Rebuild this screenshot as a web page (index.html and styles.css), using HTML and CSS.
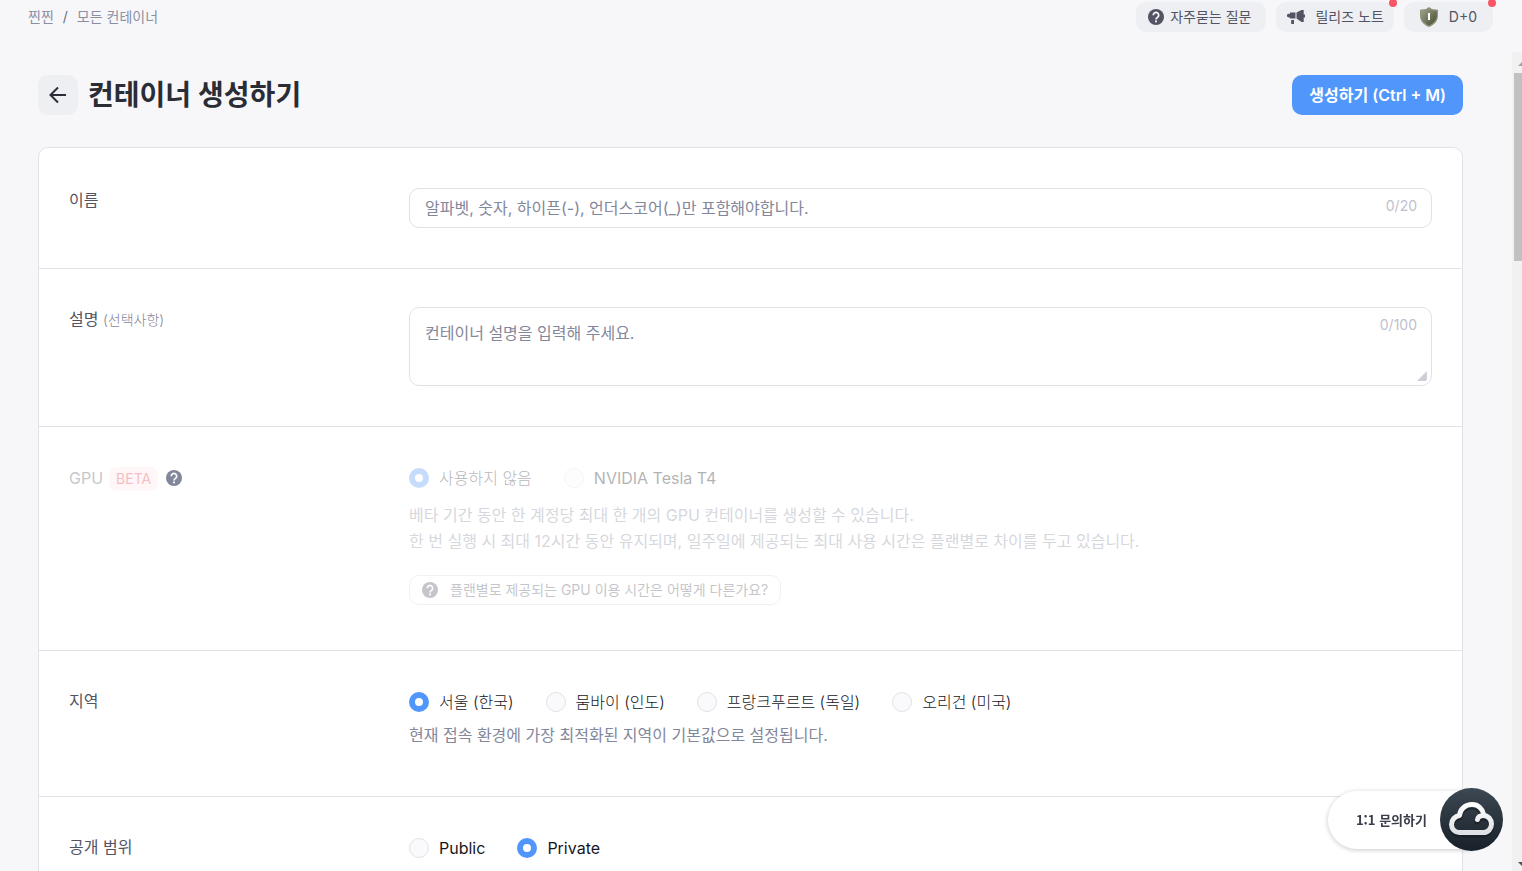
FILE: index.html
```html
<!DOCTYPE html>
<html lang="ko">
<head>
<meta charset="utf-8">
<title>컨테이너 생성하기</title>
<link rel="stylesheet" href="styles.css">
</head>
<body>
<svg class="defs" width="0" height="0" aria-hidden="true">
  <symbol id="help" viewBox="0 0 16 16">
    <circle cx="8" cy="8" r="8" fill="currentColor"/>
    <path d="M5.300 6.300a2.700 2.700 0 1 1 4.200 2.100c-.9.6-1.500 1-1.500 2" fill="none" stroke="#fff" stroke-width="1.700"/>
    <rect x="7.100" y="11.500" width="1.800" height="1.800" fill="#fff"/>
  </symbol>
</svg>
<header class="topbar">
  <nav class="crumbs">
    <a href="#">찐찐</a><span class="slash">/</span><a href="#">모든 컨테이너</a>
  </nav>
  <div class="tools">
    <button type="button" class="chip chip-faq"><svg class="help-icon"><use href="#help"/></svg><span>자주묻는 질문</span></button>
    <button type="button" class="chip chip-notes">
      <svg width="18" height="16" viewBox="0 0 18 16" fill="currentColor"><path d="M3 3.500h5.500v6H3V8.500H1.800a1.900 1.900 0 0 1 0-3.800H3zM9.500 3.500L14.500 1h2.200v12h-2.200L9.500 9.500zM16.500 5.500h1.500v3h-1.500zM4.200 11h2.800v4H4.200z"/></svg>
      <span>릴리즈 노트</span><span class="dot"></span>
    </button>
    <button type="button" class="chip chip-day">
      <svg width="20" height="20" viewBox="0 0 20 20">
        <defs><linearGradient id="shield" x1="0" y1="0" x2="1" y2="1"><stop offset="0" stop-color="#a3a58f"/><stop offset="1" stop-color="#414a2b"/></linearGradient></defs>
        <path d="M10 0l3 2 6 .8v6.200c0 5-4 9-9 11-5-2-9-6-9-11V2.800L7 2z" fill="#8f947c"/>
        <path d="M10 1.500l2.700 1.800 5 .8v5c0 4-3.700 7.500-7.700 9.500-4-2-7.700-5.500-7.700-9.500v-5l5-.8z" fill="url(#shield)"/>
        <path d="M10 6v7" stroke="#fff" stroke-width="2"/>
      </svg>
      <span>D+0</span><span class="dot"></span>
    </button>
  </div>
</header>
<div class="viewport">
  <main class="page">
    <div class="heading">
      <button type="button" class="back" aria-label="뒤로">
        <svg width="18" height="18" viewBox="0 0 18 18" fill="none" stroke="currentColor" stroke-width="2"><path d="M17 9H2M9 1.500L1.500 9 9 16.500"/></svg>
      </button>
      <h1>컨테이너 생성하기</h1>
      <button type="submit" form="create" class="submit">생성하기 (Ctrl + M)</button>
    </div>
    <form class="card" id="create">
      <div class="row">
        <label class="name" for="cname">이름</label>
        <div class="field">
          <input class="text" id="cname" type="text" placeholder="알파벳, 숫자, 하이픈(-), 언더스코어(_)만 포함해야합니다.">
          <span class="count">0/20</span>
        </div>
      </div>
      <div class="row row-desc">
        <label class="name" for="cdesc">설명 <small>(선택사항)</small></label>
        <div class="field">
          <textarea class="text area" id="cdesc" placeholder="컨테이너 설명을 입력해 주세요."></textarea>
          <span class="count">0/100</span>
          <svg class="grip" width="10" height="10" viewBox="0 0 10 10"><path d="M10 0v8a2 2 0 0 1-2 2H0z" fill="#cdced8"/></svg>
        </div>
      </div>
      <div class="row row-gpu">
        <div class="name gpu-name"><span class="faded">GPU</span><span class="beta faded">BETA</span><svg class="help-icon"><use href="#help"/></svg></div>
        <div class="faded">
          <div class="radios" role="radiogroup" aria-label="GPU">
            <label><input type="radio" name="gpu" checked>사용하지 않음</label>
            <label class="latin"><input type="radio" name="gpu">NVIDIA Tesla T4</label>
          </div>
          <p class="hint">베타 기간 동안 한 계정당 최대 한 개의 GPU 컨테이너를 생성할 수 있습니다.<br>한 번 실행 시 최대 12시간 동안 유지되며, 일주일에 제공되는 최대 사용 시간은 플랜별로 차이를 두고 있습니다.</p>
          <button type="button" class="plan"><svg class="help-icon"><use href="#help"/></svg>플랜별로 제공되는 GPU 이용 시간은 어떻게 다른가요?</button>
        </div>
      </div>
      <div class="row row-region">
        <div class="name short">지역</div>
        <div>
          <div class="radios" role="radiogroup" aria-label="지역">
            <label><input type="radio" name="region" checked>서울 (한국)</label>
            <label><input type="radio" name="region">뭄바이 (인도)</label>
            <label><input type="radio" name="region">프랑크푸르트 (독일)</label>
            <label><input type="radio" name="region">오리건 (미국)</label>
          </div>
          <p class="hint">현재 접속 환경에 가장 최적화된 지역이 기본값으로 설정됩니다.</p>
        </div>
      </div>
      <div class="row">
        <div class="name short">공개 범위</div>
        <div class="radios" role="radiogroup" aria-label="공개 범위">
          <label class="latin"><input type="radio" name="scope">Public</label>
          <label class="latin"><input type="radio" name="scope" checked>Private</label>
        </div>
      </div>
    </form>
  </main>
  <div class="scroll" aria-hidden="true">
    <svg width="10" height="21" viewBox="0 0 10 21"><path d="M6 14l5-5v5z" fill="#a3a3a3"/></svg>
    <div class="thumb"></div>
    <svg width="10" height="14" viewBox="0 0 10 14"><path d="M6 5h5v5z" fill="#505050"/></svg>
  </div>
</div>
<button type="button" class="chat">
  <span class="chat-label">1:1 문의하기</span>
  <svg class="cloud" width="64" height="64" viewBox="0 0 64 64">
    <defs>
      <linearGradient id="disc" x1="0" y1="0" x2="0" y2="1"><stop offset="0" stop-color="#3d4852"/><stop offset="1" stop-color="#182029"/></linearGradient>
      <linearGradient id="line" x1="0" y1="0" x2="0" y2="1"><stop offset="0" stop-color="#fff"/><stop offset="1" stop-color="#dfe1e4"/></linearGradient>
      <path id="outline" d="M37.500 31.500C38 29 40.500 27.500 43.500 27.500 48 27.500 51.500 31.500 51.500 36S48 44.500 43.500 44.500H19.500C15 44.500 11.500 41 11.500 36.500S15 28 19.500 27.500C20 21 25.500 16.500 32 16.500c6 0 10.500 4 12 10.500" fill="none" stroke-linecap="round" stroke-linejoin="round"/>
    </defs>
    <circle cx="31.500" cy="31.500" r="31.500" fill="url(#disc)"/>
    <use href="#outline" y="2" stroke="#10171e" stroke-opacity=".5" stroke-width="6"/>
    <use href="#outline" stroke="url(#line)" stroke-width="5"/>
  </svg>
</button>
</body>
</html>
```
FILE: styles.css
```css
* { box-sizing: border-box; }
body {
  margin: 0;
  height: 100vh;
  display: flex;
  flex-direction: column;
  overflow: hidden;
  background: #f7f7fa;
  color: #2b2d36;
  font: 16px/26px Inter, "Noto Sans CJK KR", sans-serif;
}
button, input, textarea { font: inherit; color: inherit; }
button { border: 0; padding: 0; cursor: pointer; }
a { color: inherit; text-decoration: none; }
.defs { position: absolute; }
.help-icon { width: 16px; height: 16px; flex: none; }

.topbar {
  flex: none;
  height: 52px;
  padding: 2px 29px 0 28px;
  display: flex;
  justify-content: space-between;
  align-items: flex-start;
  font-size: 14px;
}
.crumbs { display: flex; gap: 8px; line-height: 30px; color: #8b8fa3; }
.slash { color: #6d7080; padding: 0 1px; }
.tools { display: flex; gap: 10px; }
.chip {
  position: relative;
  height: 30px;
  border-radius: 10px;
  background: #eeeff3;
  color: #525463;
  display: flex;
  align-items: center;
  line-height: 30px;
}
.chip-faq { gap: 6px; padding: 0 15px 0 12px; }
.chip-notes { gap: 10px; padding: 0 10px 0 11px; }
.chip-day { gap: 10px; padding: 0 16px 0 15px; }
.dot {
  position: absolute;
  top: -3px;
  right: -3px;
  width: 8px;
  height: 8px;
  border-radius: 50%;
  background: #fa5563;
}

.viewport { flex: 1; min-height: 0; display: flex; }
.page { flex: 1; min-width: 0; padding: 23px 49px 0 38px; overflow: hidden; }
.heading { display: flex; align-items: center; height: 40px; margin-bottom: 32px; }
.back {
  width: 40px;
  height: 40px;
  border-radius: 10px;
  background: #eeeff3;
  color: #2b2d36;
  display: grid;
  place-items: center;
}
h1 { flex: 1; margin: 0 0 0 10px; font-size: 28px; line-height: 40px; font-weight: 600; }
.submit {
  height: 40px;
  padding: 0 17px;
  border-radius: 10px;
  background: #5196fb;
  color: #fff;
  font-weight: 600;
}

.card { background: #fff; border: 1px solid #e1e2e8; border-radius: 10px; }
.row { display: grid; grid-template-columns: 340px 1fr; padding: 40px 30px; }
.row + .row { border-top: 1px solid #e1e2e8; }
.row-desc { padding-top: 38px; }
.row-gpu { padding-bottom: 45px; }
.row-region { padding-bottom: 48px; }
.name { line-height: 24px; color: #525463; }
.name small { font-size: 14px; color: #83879b; font-weight: 300; }
.short { line-height: 20px; }
.gpu-name { display: flex; align-items: flex-start; line-height: 22px; }
.beta {
  margin: 0 8px 0 6px;
  padding: 0 7px;
  border-radius: 8px;
  background: #ffe5e7;
  color: #e03a4c;
  font-size: 14px;
  line-height: 24px;
}
.gpu-name .help-icon { margin-top: 3px; color: #83879b; }
.faded { opacity: .33; }

.field { position: relative; }
.text {
  display: block;
  width: 100%;
  height: 40px;
  padding: 0 80px 0 15px;
  border: 1px solid #e1e2e8;
  border-radius: 10px;
  background: #fff;
  outline: none;
}
.text::placeholder { color: #83879b; opacity: 1; }
.area { height: 79px; padding-top: 12px; resize: none; }
.count { position: absolute; top: 5px; right: 15px; color: #bfc1cd; font-size: 14px; }
.grip { position: absolute; right: 5px; bottom: 5px; }

.radios { display: flex; gap: 32px; height: 22px; align-items: center; font-weight: 300; color: #16171c; }
.radios label { display: flex; align-items: center; gap: 10px; }
.radios .latin { font-weight: 400; }
.radios input {
  appearance: none;
  margin: 0;
  width: 20px;
  height: 20px;
  border: 1px solid #e1e2e8;
  border-radius: 50%;
  background: #fafafc;
}
.radios input:checked { border: 6px solid #5196fb; background: #fff; }
.hint { margin: 9px 0 0; color: #83879b; }
.row-gpu .hint { margin-top: 13px; }
.plan {
  margin-top: 21px;
  height: 30px;
  padding: 0 12px;
  border: 1px solid #d5d6de;
  border-radius: 10px;
  background: #fff;
  color: #525463;
  display: flex;
  align-items: center;
  gap: 12px;
  font-size: 14px;
}

.scroll { width: 10px; flex: none; background: #f1f1f1; display: flex; flex-direction: column; }
.thumb { height: 188px; margin: 0 0 auto 2px; background: #c1c1c1; }
.scroll svg { display: block; flex: none; }

.chat {
  position: fixed;
  right: 18px;
  bottom: 19px;
  height: 64px;
  display: flex;
  align-items: center;
  background: none;
}
.chat-label {
  height: 58px;
  margin-right: -52px;
  padding: 0 65px 0 28px;
  border-radius: 29px;
  background: #fff;
  box-shadow: 0 1px 5px rgba(0, 0, 0, .22);
  font: 700 13px/58px "Noto Sans CJK KR", sans-serif;
  color: #3a3c49;
}
.cloud { position: relative; }
```
